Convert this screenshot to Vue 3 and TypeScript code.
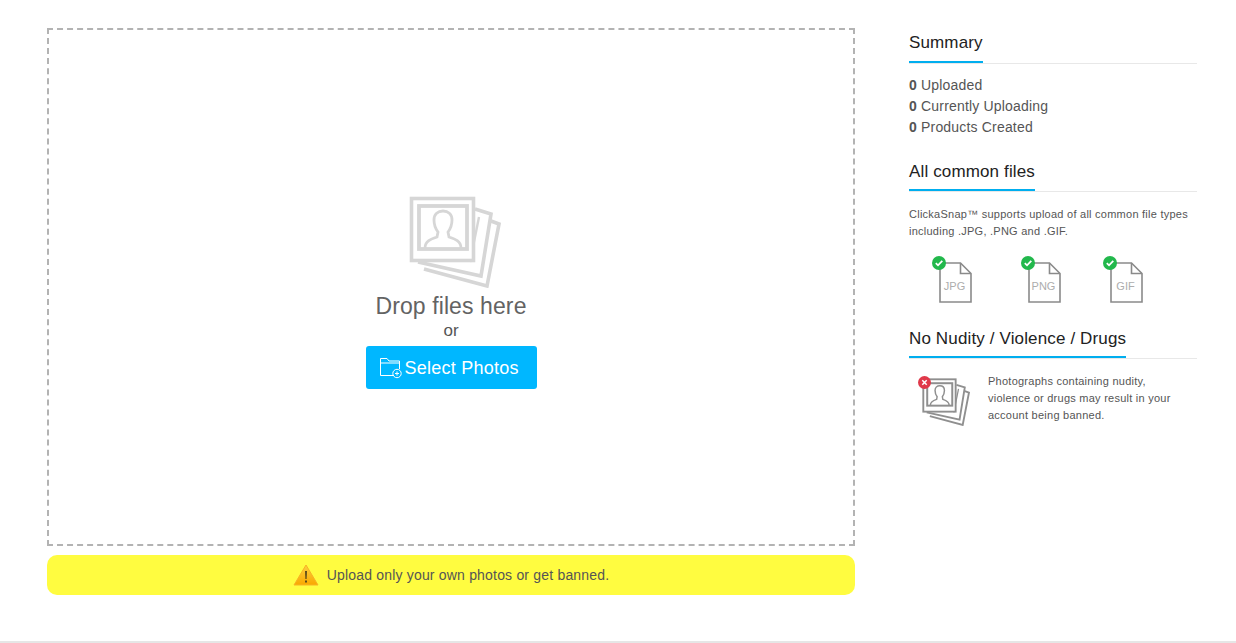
<script setup lang="ts">
interface FileType {
  label: string
}

const stats = [
  { count: 0, label: 'Uploaded' },
  { count: 0, label: 'Currently Uploading' },
  { count: 0, label: 'Products Created' },
]

const fileTypes: FileType[] = [{ label: 'JPG' }, { label: 'PNG' }, { label: 'GIF' }]
</script>

<template>
  <div class="page">
    <svg class="defs" width="0" height="0" aria-hidden="true">
      <symbol id="photos" viewBox="0 0 92 92">
        <g fill="none" stroke="currentColor" stroke-width="3.6">
          <path d="M82 25 L90 28 L78 90 L15 73" />
          <path d="M66 13 L82 18 L72 80 L9 66" />
          <path d="M70 21 L61 66" stroke-width="2.400" />
          <rect x="2.500" y="2.500" width="62" height="62" fill="#fff" />
          <rect x="10" y="10" width="48" height="43" stroke-width="3.800" />
          <path
            d="M16 52 C16 45 22 43 28 41 L29 36 C26 32 25 28 25 24 C25 18 29 15 34 15 C39 15 43 18 43 24 C43 28 42 32 39 36 L40 41 C46 43 52 45 52 52"
            stroke-width="2.800"
          />
        </g>
      </symbol>
    </svg>

    <main class="content">
      <section class="uploader">
        <div class="dropzone">
          <svg class="drop-icon" width="92" height="92">
            <use href="#photos" />
          </svg>
          <div class="drop-title">Drop files here</div>
          <div class="drop-or">or</div>
          <button class="select-btn" type="button">
            <svg class="folder" width="24" height="23" viewBox="0 0 24 23" fill="none" stroke="#fff" stroke-width="1">
              <path d="M15 19.500 H1.500 V2.500 H8 L10 5 H20.500 V13" />
              <path d="M1.500 7 H20.500" />
              <circle cx="18" cy="17.500" r="4.200" />
              <path d="M18 15.500 V19.500 M16 17.500 H20" />
            </svg>
            <span class="btn-text">Select Photos</span>
          </button>
        </div>

        <div class="warning">
          <svg class="warn-icon" width="26" height="22" viewBox="0 0 26 22">
            <defs>
              <linearGradient id="warnFill" x1="0" y1="0" x2="0" y2="1">
                <stop offset="0" stop-color="#fcd040" />
                <stop offset="1" stop-color="#f9a800" />
              </linearGradient>
            </defs>
            <path d="M13 1 L25 21 H1 Z" fill="url(#warnFill)" stroke="#f8b224" stroke-width="1" stroke-linejoin="round" />
            <path d="M12 7 H14 L13.600 15 H12.400 Z" fill="#5b4a1a" />
            <rect x="12" y="16.500" width="2" height="2" fill="#5b4a1a" />
          </svg>
          <span>Upload only your own photos or get banned.</span>
        </div>
      </section>

      <aside class="sidebar">
        <div class="block">
          <h3 class="heading"><span>Summary</span></h3>
          <ul class="stats">
            <li v-for="stat in stats" :key="stat.label">
              <strong>{{ stat.count }}</strong> {{ stat.label }}
            </li>
          </ul>
        </div>

        <div class="block">
          <h3 class="heading"><span>All common files</span></h3>
          <p class="note">ClickaSnap™ supports upload of all common file types including .JPG, .PNG and .GIF.</p>
          <div class="types">
            <div v-for="type in fileTypes" :key="type.label" class="type">
              <svg class="sheet" width="33" height="41" viewBox="0 0 33 41" fill="none" stroke="#8a8a8a" stroke-width="1.600">
                <path d="M1 1 H21.500 L32 11.500 V40 H1 Z" fill="#fff" />
                <path d="M21.500 1 V11.500 H32" />
              </svg>
              <span class="type-label">{{ type.label }}</span>
              <svg class="check" width="14" height="14" viewBox="0 0 14 14">
                <circle cx="7" cy="7" r="7" fill="#22b84c" />
                <path d="M3.800 7.200 L6 9.300 L10.300 4.900" fill="none" stroke="#fff" stroke-width="1.800" />
              </svg>
            </div>
          </div>
        </div>

        <div class="block">
          <h3 class="heading"><span>No Nudity / Violence / Drugs</span></h3>
          <div class="ban">
            <div class="ban-icon">
              <svg class="ban-photos" width="48" height="48">
                <use href="#photos" />
              </svg>
              <svg class="cross" width="13" height="13" viewBox="0 0 13 13">
                <circle cx="6.500" cy="6.500" r="6.500" fill="#e0394a" />
                <path d="M4.300 4.300 L8.700 8.700 M8.700 4.300 L4.300 8.700" stroke="#fff" stroke-width="1.500" />
              </svg>
            </div>
            <p class="note">Photographs containing nudity, violence or drugs may result in your account being banned.</p>
          </div>
        </div>
      </aside>
    </main>
    <footer class="foot"></footer>
  </div>
</template>

<style>
html,
body {
  margin: 0;
  background: #fff;
}
</style>

<style scoped>
.page {
  height: 643px;
  display: flex;
  flex-direction: column;
  overflow: hidden;
  font-family: "Liberation Sans", Arial, sans-serif;
  color: #555;
}
.defs {
  position: absolute;
}
.content {
  flex: 1;
  display: flex;
  gap: 54px;
  padding: 28px 39px 0 47px;
}
.uploader {
  width: 808px;
  flex-shrink: 0;
}
.dropzone {
  box-sizing: border-box;
  height: 518px;
  border: 2px dashed #b3b3b3;
  display: flex;
  flex-direction: column;
  align-items: center;
  padding-top: 166px;
}
.drop-icon {
  display: block;
  color: #d6d6d6;
  margin-left: 8px;
}
.drop-title {
  font-size: 23px;
  letter-spacing: 0.1px;
  line-height: 26px;
  margin-top: 5px;
  color: #636363;
}
.drop-or {
  font-size: 17px;
  line-height: 20px;
  color: #555;
  margin-top: 2px;
}
.select-btn {
  display: flex;
  align-items: center;
  gap: 2px;
  width: 171px;
  height: 43px;
  margin-top: 5px;
  padding: 0 0 0 13px;
  border: 0;
  border-radius: 3px;
  background: #00b7ff;
  color: #fff;
  font-family: inherit;
  font-size: 18px;
  letter-spacing: 0.25px;
}
.btn-text {
  padding-top: 2px;
}
.folder {
  flex-shrink: 0;
}
.warning {
  height: 40px;
  margin-top: 9px;
  border-radius: 10px;
  background: #fffc40;
  display: flex;
  align-items: center;
  justify-content: center;
  gap: 8px;
  font-size: 14px;
  letter-spacing: 0.19px;
  color: #555;
}
.sidebar {
  width: 288px;
  flex-shrink: 0;
}
.heading {
  margin: 0;
  border-bottom: 1px solid #e8e8e8;
  font-weight: 400;
  font-size: 17px;
  letter-spacing: 0.14px;
  line-height: 20px;
  color: #222;
  height: 36px;
  box-sizing: border-box;
  padding-top: 5px;
}
.heading span {
  display: inline-block;
  height: 30px;
  border-bottom: 2px solid #00aeef;
  box-sizing: border-box;
}
.block + .block .heading {
  padding-top: 6px;
}
.block + .block .heading span {
  height: 29px;
}
.stats {
  list-style: none;
  margin: 11px 0 0;
  padding: 0;
  font-size: 14px;
  letter-spacing: 0.18px;
  line-height: 21px;
  color: #555;
}
.stats strong {
  font-weight: 700;
}
.block:nth-child(2) {
  margin-top: 18px;
}
.block:nth-child(3) {
  margin-top: 20px;
}
.note {
  margin: 0;
  font-size: 11px;
  letter-spacing: 0.25px;
  line-height: 17px;
  color: #555;
}
.block:nth-child(2) .note {
  margin-top: 14px;
}
.types {
  display: flex;
  margin-top: 22px;
  padding-left: 30px;
}
.type {
  position: relative;
  width: 33px;
  height: 41px;
  margin-right: 56px;
}
.type:nth-child(2) {
  margin-right: 49px;
}
.sheet {
  display: block;
}
.type-label {
  position: absolute;
  left: -1px;
  right: 1px;
  top: 18px;
  text-align: center;
  font-size: 11px;
  line-height: 13px;
  color: #adadad;
}
.check {
  position: absolute;
  left: -7px;
  top: -6px;
}
.ban {
  display: flex;
  margin-top: 14px;
}
.ban-icon {
  position: relative;
  width: 48px;
  height: 48px;
  margin: 5px 0 0 13px;
  color: #8f8f8f;
  flex-shrink: 0;
}
.ban-photos {
  display: block;
}
.cross {
  position: absolute;
  left: -4px;
  top: -2px;
}
.ban .note {
  margin: 0 0 0 18px;
  width: 190px;
}
.foot {
  height: 2px;
  background: #e6e6e6;
  flex-shrink: 0;
}
</style>
